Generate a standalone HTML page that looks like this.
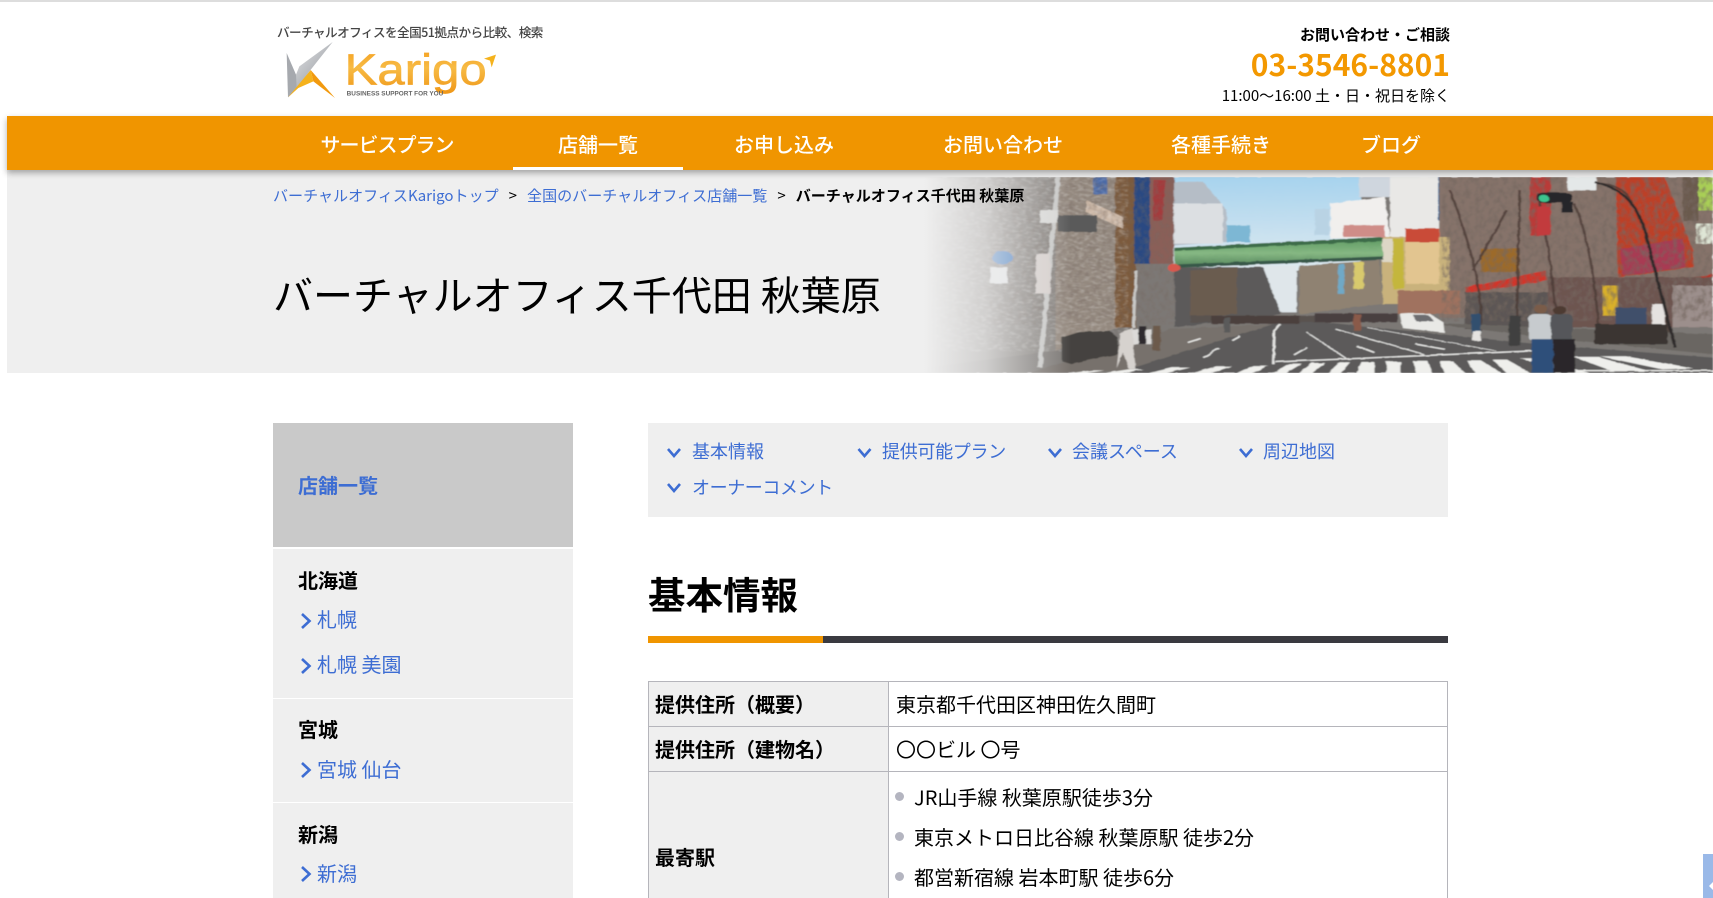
<!DOCTYPE html>
<html lang="ja"><head><meta charset="utf-8"><title>バーチャルオフィス千代田 秋葉原</title>
<style>
html,body{margin:0;padding:0;width:1713px;height:898px;overflow:hidden;background:#fff}
body{font-family:"Liberation Sans","Noto Sans CJK JP",sans-serif;position:relative;color:#000}
.n,.n *{font-family:"Noto Sans CJK JP",sans-serif}
.a{position:absolute;white-space:nowrap}
.n{font-family:"Noto Sans CJK JP",sans-serif}
.l{color:#3d6dd3}
.b{font-weight:700}
svg{position:absolute;display:block}
.nav{font-size:20px;line-height:30px;color:#fff;font-weight:500;top:129px;transform:translateX(-50%)}
.side{font-size:20px;line-height:30px}
.tab{font-size:18px;line-height:26px;top:438px}
.th{font-size:20px;line-height:30px;font-weight:700;left:655px}
.td{font-size:20px;line-height:30px}
.bl{position:absolute;left:895px;width:9px;height:9px;border-radius:50%;background:#b4b5c0}
</style></head><body>
<div class="a" style="left:0;top:0;width:1713px;height:2px;background:#ddd"></div>

<div class="a n" style="left:277px;top:23px;font-size:12.600px;line-height:18px;color:#444;letter-spacing:-.55px;font-weight:500">バーチャルオフィスを全国51拠点から比較、検索</div>
<svg style="left:280px;top:38px" width="230" height="70" viewBox="0 0 690 210">
<defs><linearGradient id="g1" x1="0" y1="0" x2="1" y2="1"><stop offset="0" stop-color="#e6e7e9"/><stop offset="1" stop-color="#8f9399"/></linearGradient>
<linearGradient id="g2" x1="0" y1="0" x2="0" y2="1"><stop offset="0" stop-color="#f59c1a"/><stop offset=".45" stop-color="#f7bb45"/><stop offset="1" stop-color="#ef9515"/></linearGradient></defs>
<polygon points="158,12 58,85 38,135 50,150 90,98" fill="url(#g1)"/>
<polygon points="20,45 48,110 50,150 24,178" fill="#a6a9ae"/>
<polygon points="24,178 92,96 100,130 55,150" fill="#f5b21c"/>
<polygon points="92,96 165,180 100,130" fill="#f29a0f"/>
<text x="194" y="140" font-family="Liberation Sans,sans-serif" font-size="132" textLength="426" lengthAdjust="spacingAndGlyphs" fill="url(#g2)" stroke="url(#g2)" stroke-width="2">Karigo</text>
<polygon points="612,62 648,50 635,88 630,68" fill="#f5b21c"/>
<text x="200" y="172" font-family="Liberation Sans,sans-serif" font-size="20" font-weight="700" textLength="290" lengthAdjust="spacingAndGlyphs" fill="#666">BUSINESS SUPPORT FOR YOU</text>
</svg>

<div class="a n b" style="right:263px;top:24px;font-size:15px;line-height:22px">お問い合わせ・ご相談</div>
<div class="a n b" style="right:263px;top:42px;font-size:30px;line-height:42px;color:#f39800">03-3546-8801</div>
<div class="a n" style="right:263px;top:85px;font-size:15px;line-height:22px">11:00～16:00 土・日・祝日を除く</div>

<div class="a" style="left:7px;top:170px;width:1706px;height:203px;background:#efefef"></div>
<svg style="left:900px;top:177px" width="813" height="196" viewBox="0 21 1568 585" preserveAspectRatio="none">
<defs>
<linearGradient id="sky" x1="0" y1="0" x2="0" y2="1"><stop offset="0" stop-color="#a7d3ee"/><stop offset="1" stop-color="#dfeaf0"/></linearGradient>
<linearGradient id="fade" x1="0" y1="0" x2="1" y2="0"><stop offset="0" stop-color="#efefef"/><stop offset=".14" stop-color="#efefef"/><stop offset=".5" stop-color="#efefef" stop-opacity=".72"/><stop offset="1" stop-color="#efefef" stop-opacity="0"/></linearGradient>
<linearGradient id="br" x1="0" y1="0" x2="0" y2="1"><stop offset="0" stop-color="#5f9a63"/><stop offset=".5" stop-color="#86b883"/><stop offset="1" stop-color="#4f7f58"/></linearGradient>
<filter id="bl" x="0" y="0" width="100%" height="100%"><feTurbulence type="fractalNoise" baseFrequency=".05" numOctaves="2" seed="4" result="t"/><feDisplacementMap in="SourceGraphic" in2="t" scale="6" result="d"/><feGaussianBlur in="d" stdDeviation="1.300"/></filter>
<filter id="tex" x="0" y="0" width="100%" height="100%"><feTurbulence type="fractalNoise" baseFrequency=".11 .05" numOctaves="3" seed="9"/><feColorMatrix values="0 0 0 0 .18  0 0 0 0 .14  0 0 0 0 .12  2.600 0 0 0 -1.050"/><feComposite in2="SourceAlpha" operator="in"/></filter>
<filter id="tex2" x="0" y="0" width="100%" height="100%"><feTurbulence type="fractalNoise" baseFrequency=".09 .14" numOctaves="2" seed="3"/><feColorMatrix values="0 0 0 0 .95  0 0 0 0 .95  0 0 0 0 .95  2.200 0 0 0 -.95"/><feComposite in2="SourceAlpha" operator="in"/></filter>
</defs>
<g filter="url(#bl)">
<rect x="0" y="21" width="1568" height="585" fill="#7c7875"/>
<rect x="525" y="21" width="365" height="280" fill="url(#sky)"/>
<rect x="685" y="285" width="80" height="140" fill="#dfe6ea"/>
<polygon points="0,21 300,21 300,540 0,600" fill="#85817d"/>
<polygon points="300,21 420,21 420,470 300,540" fill="#94897f"/>
<polygon points="415,21 455,21 455,470 415,470" fill="#7b5a3c"/>
<polygon points="452,21 482,21 482,280 452,280" fill="#2a4a82"/>
<polygon points="482,21 528,21 528,280 482,280" fill="#8a5f58"/>
<polygon points="490,30 512,30 505,150 488,150" fill="#a53a3c"/>
<polygon points="360,90 430,140 430,175 358,125" fill="#cdb9a8"/>
<rect x="372" y="22" width="28" height="50" fill="#4b6aa6"/>
<polygon points="528,35 585,35 630,120 630,215 528,225" fill="#b5bdc6"/>
<rect x="528" y="100" width="95" height="120" fill="#dcdfe2"/>
<rect x="630" y="165" width="45" height="50" fill="#7db7d4"/>
<polygon points="530,290 700,290 735,430 530,470" fill="#5c5a5a"/>
<polygon points="560,300 650,290 650,430 560,440" fill="#6b5b50"/>
<polygon points="770,285 925,270 930,400 770,430" fill="#8f8272"/>
<rect x="845" y="280" width="12" height="90" fill="#6fa9c6"/>
<rect x="875" y="275" width="20" height="80" fill="#d8c96d"/>
<rect x="885" y="21" width="62" height="60" fill="#cfd6de"/>
<polygon points="830,100 935,80 945,200 830,205" fill="#f1efed"/>
<rect x="800" y="115" width="28" height="80" fill="#b9d3e4"/>
<rect x="855" y="165" width="80" height="35" fill="#cf8d88"/>
<rect x="945" y="21" width="95" height="180" fill="#e9e8e6"/>
<rect x="1038" y="21" width="38" height="130" fill="#2a5f94"/>
<rect x="1040" y="21" width="528" height="420" fill="#86736a"/>
<rect x="930" y="200" width="130" height="200" fill="#c9b27c"/>
<rect x="975" y="175" width="65" height="165" fill="#e2c590"/>
<rect x="975" y="175" width="65" height="40" fill="#c94c38"/>
<rect x="950" y="205" width="22" height="150" fill="#c4b63e"/>
<rect x="930" y="205" width="20" height="70" fill="#ddd7c6"/>
<rect x="1120" y="235" width="75" height="70" fill="#9c6a2a"/>
<polygon points="1380,21 1475,21 1530,240 1530,290 1385,320" fill="#bd3f28"/>
<polygon points="1390,235 1510,205 1515,290 1395,315" fill="#a83b52"/>
<rect x="1215" y="21" width="40" height="175" fill="#b93b38"/>
<rect x="1530" y="21" width="38" height="100" fill="#a9cf57"/>
<rect x="1510" y="21" width="30" height="130" fill="#6b5a4e"/>
<rect x="1535" y="160" width="33" height="60" fill="#dfe6d6"/>
<polygon points="1090,350 1245,300 1250,330 1092,368" fill="#d2352a"/>
<polygon points="1480,335 1568,310 1568,330 1482,348" fill="#b83528"/>
<rect x="1090" y="365" width="160" height="110" fill="#5c5654"/>
<rect x="1250" y="320" width="318" height="150" fill="#6d5550"/>
<rect x="1490" y="345" width="78" height="125" fill="#9c8f8c"/>
<rect x="1355" y="345" width="30" height="90" fill="#d9b02a"/>
<rect x="960" y="360" width="120" height="70" fill="#a0725e"/>
<rect x="60" y="21" width="470" height="440" filter="url(#tex)" opacity=".4"/>
<rect x="60" y="21" width="380" height="520" filter="url(#tex2)" opacity=".3"/>
<rect x="1045" y="21" width="523" height="430" filter="url(#tex)" opacity=".75"/>
<g stroke="#4a3a34" fill="none" stroke-width="5" opacity=".8">
<path d="M1120,480 C1125,360 1100,220 1060,60M1105,300 L1170,120M1190,440 L1195,60M1270,500 C1260,350 1250,200 1230,70M1350,500 C1340,340 1330,200 1300,100M1490,530 C1460,330 1440,150 1400,70C1380,45 1360,40 1340,40"/>
</g>
<polygon points="420,606 730,450 790,450 1230,520 1568,560 1568,606" fill="#5b5a5a"/>
<polygon points="1000,455 1568,490 1568,550 1300,510" fill="#6a6662"/>
<polygon points="250,606 430,600 720,460 520,475" fill="#77716c"/>
<rect x="560" y="435" width="400" height="20" fill="#5a5250"/>
<g stroke="#e9e9e7" fill="none">
<path d="M720,580 L722,480 L735,462" stroke-width="5"/>
<path d="M785,485 L860,562" stroke-width="3"/>
<path d="M840,475 L1010,550" stroke-width="3"/>
<path d="M900,470 L1150,540" stroke-width="2"/>
<path d="M725,573 L1220,540" stroke-width="4"/>
<path d="M585,560 L615,532M555,515 L580,503M640,508 L655,495M880,525 L915,545M995,520 L1050,535M760,552 L785,530" stroke-width="4"/>
</g>
<g fill="#efefec">
<polygon points="330,606 370,598 395,598 360,606"/><polygon points="395,606 440,595 470,595 430,606"/><polygon points="480,606 525,590 560,590 515,606"/><polygon points="565,606 610,586 640,586 600,606"/>
<polygon points="650,606 680,584 710,584 680,606"/><polygon points="720,606 750,578 775,578 745,606"/><polygon points="770,606 795,576 820,576 795,606"/><polygon points="825,606 848,574 868,574 850,606"/>
<polygon points="880,606 890,573 915,573 915,606"/><polygon points="938,606 938,572 966,572 966,606"/><polygon points="995,606 990,571 1018,571 1026,606"/><polygon points="1050,606 1040,570 1065,570 1090,606"/>
<polygon points="1110,606 1092,568 1120,568 1160,606"/><polygon points="1170,606 1142,566 1172,566 1215,606"/><polygon points="1290,606 1195,562 1225,562 1330,606"/><polygon points="1370,598 1300,558 1345,558 1440,598"/><polygon points="1470,595 1350,556 1400,556 1530,592"/><rect x="1310" y="597" width="258" height="4"/>
</g>
<polygon points="965,430 985,428 1020,428 1048,455 1050,485 970,472" fill="#e9e9e6"/>
<polygon points="990,432 1018,432 1030,452 996,452" fill="#6d6d70"/>
<polygon points="312,500 345,484 405,480 420,500 420,550 330,578 312,570" fill="#45423f"/>
<rect x="445" y="475" width="40" height="45" fill="#dcdad8"/>
<g>
<rect x="1212" y="430" width="45" height="80" rx="12" fill="#c7cbce"/><rect x="1218" y="505" width="42" height="100" fill="#2d4f7a"/><circle cx="1236" cy="415" r="13" fill="#7a5c4a"/>
<rect x="1255" y="430" width="42" height="80" rx="10" fill="#54575a"/><rect x="1260" y="505" width="42" height="100" fill="#29282a"/><circle cx="1272" cy="418" r="13" fill="#4d3a32"/>
<rect x="1102" y="430" width="18" height="55" fill="#32506e"/><rect x="1104" y="480" width="16" height="30" fill="#e5e3e0"/>
<rect x="1175" y="435" width="22" height="90" fill="#41413f"/>
<rect x="1380" y="410" width="60" height="70" fill="#40506a"/>
<rect x="1450" y="400" width="25" height="70" fill="#e5e2e0"/>
<rect x="1340" y="460" width="140" height="60" fill="#3a3532"/>
<polygon points="425,490 447,470 450,530 455,595 442,595 430,545 418,592" fill="#d6d2ce"/>
<rect x="488" y="465" width="14" height="75" fill="#6c5a4b"/>
<rect x="460" y="465" width="14" height="55" fill="#2e2c2d"/>
<rect x="600" y="435" width="170" height="24" fill="#4b403d"/>
<rect x="800" y="428" width="160" height="26" fill="#4a403f"/>
<rect x="875" y="430" width="14" height="50" fill="#8a5a4a"/>
<rect x="625" y="440" width="12" height="45" fill="#5a5a5a"/>
</g>
<polygon points="530,237 930,205 932,266 530,292" fill="url(#br)"/>
<polygon points="530,232 930,200 930,212 530,242" fill="#3e6c4a"/>
<polygon points="530,282 932,258 932,268 530,292" fill="#37584a"/>
<path d="M305,21 L270,590" stroke="#c9c9c7" stroke-width="9" fill="none"/>
<path d="M455,300 L450,470" stroke="#c9c9c7" stroke-width="6" fill="none"/>
<circle cx="198" cy="262" r="20" fill="#3e78bf"/><rect x="174" y="290" width="34" height="48" fill="#e4e6e8"/>
<rect x="262" y="250" width="28" height="120" fill="#d6cfcc"/>
<circle cx="528" cy="292" r="12" fill="#d8584e"/>
<rect x="270" y="120" width="35" height="38" fill="#d8d8d6"/>
<rect x="305" y="135" width="75" height="50" fill="#5a5a5a"/>
<rect x="1287" y="21" width="56" height="40" fill="#e4e8e8"/>
<rect x="1228" y="68" width="68" height="30" rx="12" fill="#28282a"/><circle cx="1241" cy="84" r="10" fill="#3ec48e"/><rect x="1277" y="95" width="21" height="32" fill="#28282a"/>
<path d="M1340,36 C1410,60 1430,130 1445,230 L1495,530" stroke="#2d2b2b" stroke-width="6" fill="none"/>
<rect x="1228" y="110" width="26" height="85" fill="#c23a3c"/>
</g>
<rect x="0" y="21" width="330" height="585" fill="url(#fade)"/>
</svg>
<div class="a" style="left:7px;top:116px;width:1706px;height:54px;background:#f09500;box-shadow:0 3px 6px rgba(0,0,0,.32)"></div>
<div class="a" style="left:513px;top:167px;width:170px;height:3px;background:#fff"></div>
<div class="a n nav" style="left:387px;letter-spacing:-1px">サービスプラン</div>
<div class="a n nav" style="left:598px">店舗一覧</div>
<div class="a n nav" style="left:784px">お申し込み</div>
<div class="a n nav" style="left:1003px">お問い合わせ</div>
<div class="a n nav" style="left:1221px">各種手続き</div>
<div class="a n nav" style="left:1391px">ブログ</div>

<div class="a n" style="left:273px;top:184px;font-size:15.050px;line-height:24px"><span class="l">バーチャルオフィスKarigoトップ</span><span style="margin:0 10px">&gt;</span><span class="l">全国のバーチャルオフィス店舗一覧</span><span style="margin:0 10px">&gt;</span><span class="b">バーチャルオフィス千代田 秋葉原</span></div>
<div class="a n" style="left:273px;top:263px;font-size:40px;line-height:60px">バーチャルオフィス千代田 秋葉原</div>

<div class="a" style="left:273px;top:423px;width:300px;height:124px;background:#c9c9c9"></div>
<div class="a" style="left:273px;top:549px;width:300px;height:349px;background:#efefef"></div>
<div class="a" style="left:273px;top:698px;width:300px;height:1px;background:#fff"></div>
<div class="a" style="left:273px;top:802px;width:300px;height:1px;background:#fff"></div>
<div class="a n b l side" style="left:298px;top:470px">店舗一覧</div>
<div class="a n b side" style="left:298px;top:565px">北海道</div>
<div class="a n l side" style="left:317px;top:604px">札幌</div>
<div class="a n l side" style="left:317px;top:649px">札幌 美園</div>
<div class="a n b side" style="left:298px;top:714px">宮城</div>
<div class="a n l side" style="left:317px;top:754px">宮城 仙台</div>
<div class="a n b side" style="left:298px;top:819px">新潟</div>
<div class="a n l side" style="left:317px;top:858px">新潟</div>

<div class="a" style="left:648px;top:423px;width:800px;height:94px;background:#efefef"></div>
<div class="a n l tab" style="left:692px">基本情報</div>
<div class="a n l tab" style="left:882px;letter-spacing:-.3px">提供可能プラン</div>
<div class="a n l tab" style="left:1072px">会議スペース</div>
<div class="a n l tab" style="left:1263px">周辺地図</div>
<div class="a n l tab" style="left:692px;top:474px;letter-spacing:-.4px">オーナーコメント</div>
<svg style="left:0;top:0" width="1713" height="898" fill="none" stroke="#3d6dd3" stroke-width="2.600">
<path d="M302,614 L309.500,621 L302,628M302,659 L309.500,666 L302,673M302,763 L309.500,770 L302,777M302,867 L309.500,874 L302,881"/>
<path d="M668,449 L674,456 L680,449M858.500,449 L864.500,456 L870.500,449M1049,449 L1055,456 L1061,449M1240,449 L1246,456 L1252,449M668,484 L674,491 L680,484"/>
</svg>

<div class="a n b" style="left:648px;top:565px;font-size:37.500px;line-height:56px">基本情報</div>
<div class="a" style="left:648px;top:636px;width:800px;height:7px;background:#3a3a40"></div>
<div class="a" style="left:648px;top:636px;width:175px;height:7px;background:#f09500"></div>

<div class="a" style="left:648px;top:681px;width:240px;height:217px;background:#efefef"></div>
<div class="a" style="left:648px;top:681px;width:800px;height:1px;background:#b5b5bb"></div>
<div class="a" style="left:648px;top:726px;width:800px;height:1px;background:#b5b5bb"></div>
<div class="a" style="left:648px;top:771px;width:800px;height:1px;background:#b5b5bb"></div>
<div class="a" style="left:648px;top:681px;width:1px;height:217px;background:#b5b5bb"></div>
<div class="a" style="left:888px;top:681px;width:1px;height:217px;background:#b5b5bb"></div>
<div class="a" style="left:1447px;top:681px;width:1px;height:217px;background:#b5b5bb"></div>
<div class="a n th" style="top:689px">提供住所（概要）</div>
<div class="a n th" style="top:734px">提供住所（建物名）</div>
<div class="a n th" style="top:842px">最寄駅</div>
<div class="a n td" style="left:896px;top:689px">東京都千代田区神田佐久間町</div>
<div class="a n td" style="left:896px;top:734px">〇〇ビル 〇号</div>
<div class="bl" style="top:792px"></div>
<div class="bl" style="top:832px"></div>
<div class="bl" style="top:872px"></div>
<div class="a n td" style="left:914px;top:782px">JR山手線 秋葉原駅徒歩3分</div>
<div class="a n td" style="left:914px;top:822px">東京メトロ日比谷線 秋葉原駅 徒歩2分</div>
<div class="a n td" style="left:914px;top:862px">都営新宿線 岩本町駅 徒歩6分</div>

<div class="a" style="left:1703px;top:854px;width:10px;height:44px;background:#9ab9e8"></div>
<svg style="left:1703px;top:854px" width="10" height="44"><path d="M6,32 L10,28 L10,36 Z" fill="#fff"/></svg>
</body></html>
